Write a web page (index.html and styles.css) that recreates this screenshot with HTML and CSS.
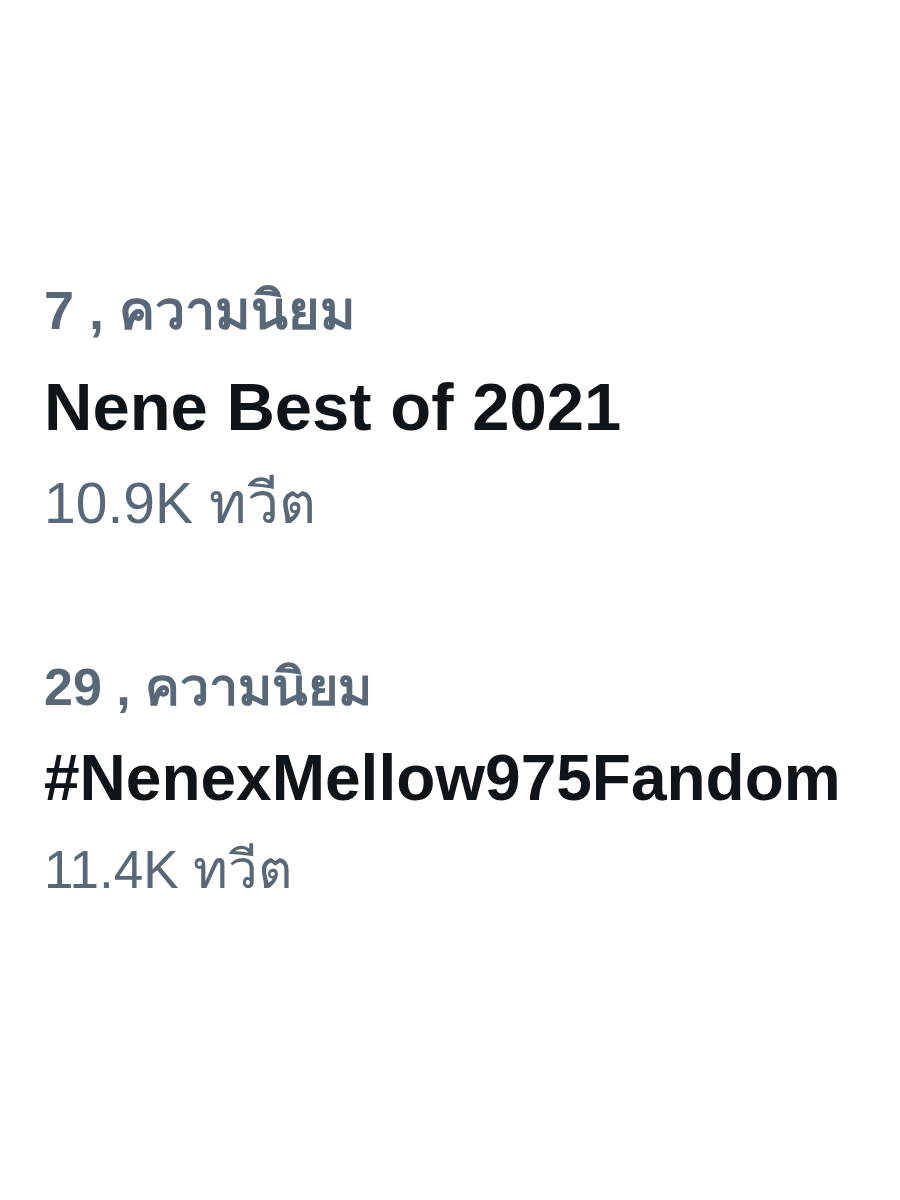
FILE: index.html
```html
<!DOCTYPE html>
<html lang="th">
<head>
<meta charset="utf-8">
<link rel="stylesheet" href="styles.css">
</head>
<body>
<main class="trends">
  <section class="trend trend-a">
    <div class="trend-meta">7 , ความนิยม</div>
    <div class="trend-title">Nene Best of 2021</div>
    <div class="trend-count">10.9K ทวีต</div>
  </section>
  <section class="trend trend-b">
    <div class="trend-meta">29 , ความนิยม</div>
    <div class="trend-title">#NenexMellow975Fandom</div>
    <div class="trend-count">11.4K ทวีต</div>
  </section>
</main>
</body>
</html>
```
FILE: styles.css
```css
html, body {
  margin: 0;
  padding: 0;
  background: #ffffff;
}
body {
  width: 900px;
  height: 1200px;
  overflow: hidden;
  font-family: "Liberation Sans", Arial, "Noto Sans", sans-serif;
}
.trends {
  display: flex;
  flex-direction: column;
  padding: 262px 0 0 44px;
  gap: 90px;
}
.trend {
  display: flex;
  flex-direction: column;
}
.trend-meta {
  color: #586878;
  font-weight: 700;
}
.trend-title {
  color: #0f1419;
  font-weight: 700;
}
.trend-count {
  color: #586878;
  font-weight: 400;
}
.trend-a .trend-meta { font-size: 54px; line-height: 97px; }
.trend-a .trend-title { font-size: 67px; line-height: 96px; }
.trend-a .trend-count { font-size: 57px; line-height: 97px; }
.trend-b .trend-meta { font-size: 52px; line-height: 91px; }
.trend-b .trend-title { font-size: 64px; line-height: 91px; }
.trend-b .trend-count { font-size: 53px; line-height: 92px; }
```
